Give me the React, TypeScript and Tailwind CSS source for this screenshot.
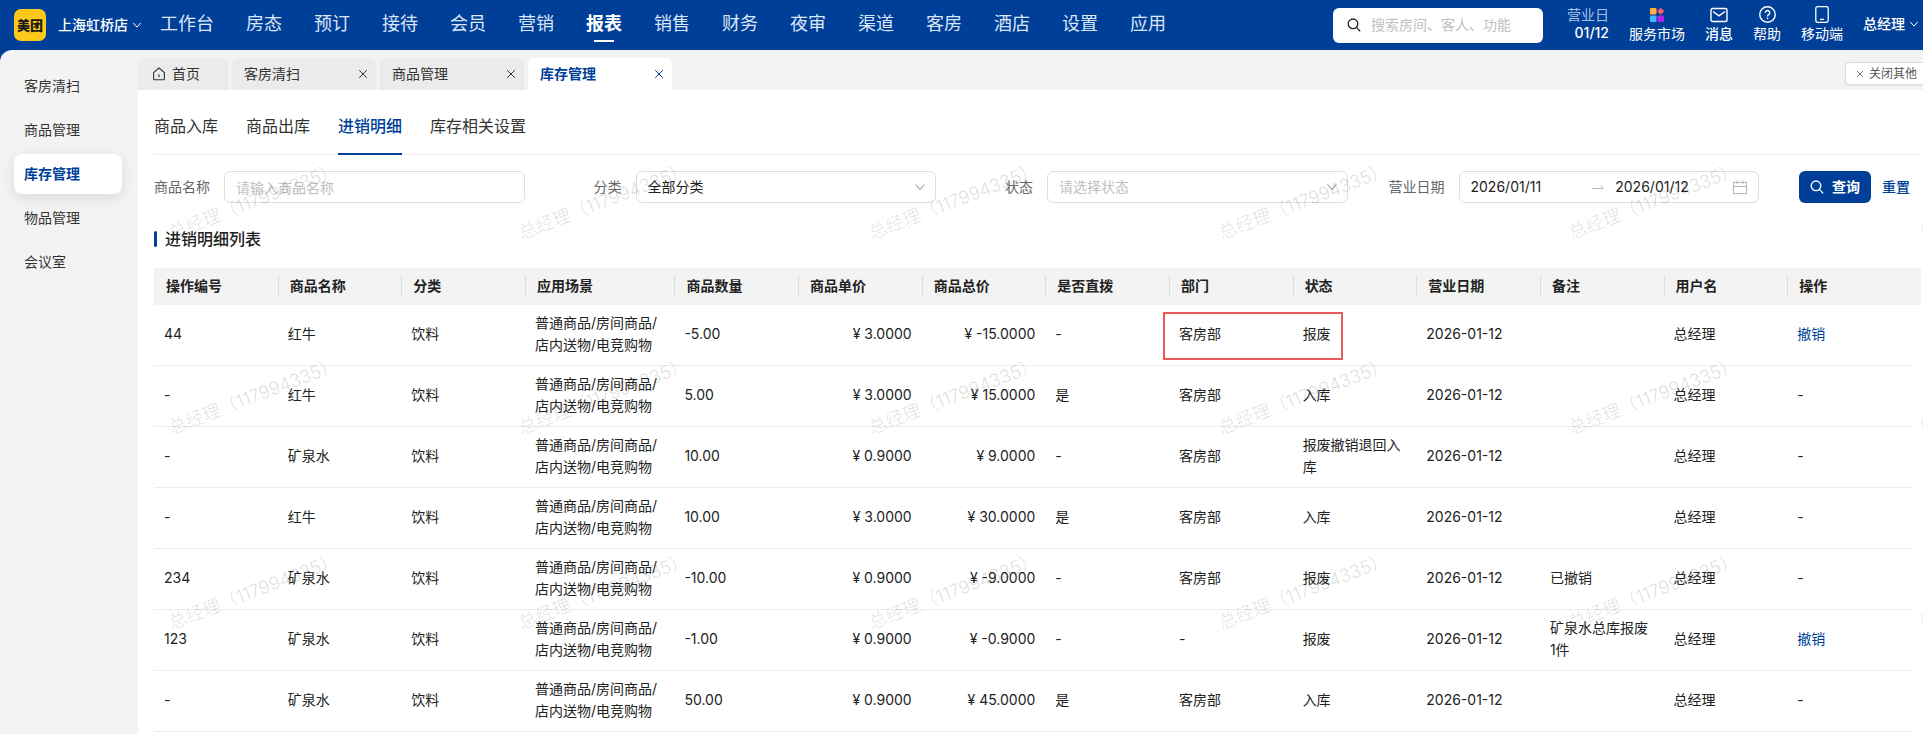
import React from "react";

const navItems = ["工作台", "房态", "预订", "接待", "会员", "营销", "报表", "销售", "财务", "夜审", "渠道", "客房", "酒店", "设置", "应用"];
const sideItems = ["客房清扫", "商品管理", "库存管理", "物品管理", "会议室"];
const subTabs = ["商品入库", "商品出库", "进销明细", "库存相关设置"];
const columns = ["操作编号", "商品名称", "分类", "应用场景", "商品数量", "商品单价", "商品总价", "是否直拨", "部门", "状态", "营业日期", "备注", "用户名", "操作"];

type Row = {
  id: string;
  name: string;
  qty: string;
  price: string;
  total: string;
  direct: string;
  dept: string;
  status: string;
  note: string;
  revocable?: boolean;
  marked?: boolean;
};

const rows: Row[] = [
  { id: "44", name: "红牛", qty: "-5.00", price: "¥ 3.0000", total: "¥ -15.0000", direct: "-", dept: "客房部", status: "报废", note: "", revocable: true, marked: true },
  { id: "-", name: "红牛", qty: "5.00", price: "¥ 3.0000", total: "¥ 15.0000", direct: "是", dept: "客房部", status: "入库", note: "" },
  { id: "-", name: "矿泉水", qty: "10.00", price: "¥ 0.9000", total: "¥ 9.0000", direct: "-", dept: "客房部", status: "报废撤销退回入库", note: "" },
  { id: "-", name: "红牛", qty: "10.00", price: "¥ 3.0000", total: "¥ 30.0000", direct: "是", dept: "客房部", status: "入库", note: "" },
  { id: "234", name: "矿泉水", qty: "-10.00", price: "¥ 0.9000", total: "¥ -9.0000", direct: "-", dept: "客房部", status: "报废", note: "已撤销" },
  { id: "123", name: "矿泉水", qty: "-1.00", price: "¥ 0.9000", total: "¥ -0.9000", direct: "-", dept: "-", status: "报废", note: "矿泉水总库报废1件", revocable: true },
  { id: "-", name: "矿泉水", qty: "50.00", price: "¥ 0.9000", total: "¥ 45.0000", direct: "是", dept: "客房部", status: "入库", note: "" },
];

function Chevron({ className }: { className?: string }) {
  return (
    <svg viewBox="0 0 12 12" className={className} fill="none" stroke="currentColor" strokeWidth="1.2" aria-hidden="true">
      <path d="M1.5 3.5 6 8.5l4.5-5" />
    </svg>
  );
}

function Cross({ className }: { className?: string }) {
  return (
    <svg viewBox="0 0 12 12" className={className} fill="none" stroke="currentColor" strokeWidth="1.2" aria-hidden="true">
      <path d="M1.5 1.5l9 9M10.5 1.5l-9 9" />
    </svg>
  );
}

function Magnifier({ className }: { className?: string }) {
  return (
    <svg viewBox="0 0 14 14" className={className} fill="none" stroke="currentColor" strokeWidth="1.3" aria-hidden="true">
      <circle cx="6" cy="5.8" r="4.8" />
      <path d="M9.4 9.4 13.2 13.4" />
    </svg>
  );
}

function HeaderLink({ label, strong, children }: { label: string; strong?: boolean; children: React.ReactNode }) {
  return (
    <a href="#" className="flex flex-col items-center gap-[3px] pb-0.5">
      <span className="flex h-[17px] items-center">{children}</span>
      <span className={strong ? "leading-4 font-medium" : "leading-4"}>{label}</span>
    </a>
  );
}

function Header() {
  return (
    <header className="flex h-[50px] items-center bg-[#003f98] pr-1 pl-3.5 text-sm whitespace-nowrap text-white">
      <span className="flex size-8 shrink-0 items-center justify-center rounded-[7px] bg-[#ffc91a] text-[13px] font-black text-[#1a1a1a]">美团</span>
      <button type="button" className="ml-3 flex shrink-0 items-center gap-1 font-medium">
        上海虹桥店
        <Chevron className="size-2.5" />
      </button>
      <nav className="ml-[18px] flex gap-8 text-lg leading-[48px]">
        {navItems.map((n) => (
          <a
            key={n}
            href="#"
            className={
              n === "报表"
                ? "relative h-[50px] font-bold after:absolute after:bottom-2 after:left-2 after:h-0.5 after:w-5 after:bg-white"
                : "h-[50px] text-[#dbe6f6]"
            }
          >
            {n}
          </a>
        ))}
      </nav>
      <div className="ml-auto flex items-center gap-5">
        <label className="mr-1 flex h-[35px] w-[210px] items-center gap-2.5 rounded-md bg-white px-3.5 text-[#222]">
          <Magnifier className="size-3.5 shrink-0" />
          <input aria-label="搜索" placeholder="搜索房间、客人、功能" className="w-full min-w-0 text-sm outline-none placeholder:text-[#bfbfbf]" />
        </label>
        <div className="flex flex-col items-end pb-0.5 leading-[18px]">
          <span className="text-[#a9c2e6]">营业日</span>
          <span className="font-medium">01/12</span>
        </div>
        <HeaderLink label="服务市场">
          <svg viewBox="0 0 14 14" className="size-3.5" aria-hidden="true">
            <rect width="6.500" height="6.500" rx="1" fill="#ffb03a" />
            <path d="M10.700 0 14 3.300 10.700 6.600 7.400 3.300z" fill="#ff5a6a" stroke="#ff5a6a" strokeWidth="0.6" strokeLinejoin="round" />
            <rect y="7.500" width="6.500" height="6.500" rx="1" fill="#3fb4ff" />
            <rect x="7.500" y="7.500" width="6.500" height="6.500" rx="1" fill="#b620f0" />
          </svg>
        </HeaderLink>
        <HeaderLink label="消息" strong>
          <svg viewBox="0 0 18 16" className="h-4 w-[18px]" fill="none" stroke="currentColor" strokeWidth="1.4" aria-hidden="true">
            <rect x="1" y="1.500" width="16" height="13" rx="1.800" />
            <path d="M3 4.500l6 4.300 6-4.300" />
          </svg>
        </HeaderLink>
        <HeaderLink label="帮助">
          <svg viewBox="0 0 16 16" className="size-[17px]" fill="none" stroke="currentColor" strokeWidth="1.3" aria-hidden="true">
            <circle cx="8" cy="8" r="7.300" />
            <path d="M5.900 6.400a2.100 2.100 0 1 1 3.200 1.800c-.8.4-1.100.8-1.100 1.600" />
            <path d="M8 11v1.400" />
          </svg>
        </HeaderLink>
        <HeaderLink label="移动端">
          <svg viewBox="0 0 14 17" className="h-[17px] w-3.5" fill="none" stroke="currentColor" strokeWidth="1.3" aria-hidden="true">
            <rect x="0.800" y="0.700" width="12.400" height="15.600" rx="1.800" />
            <path d="M5 13.400h4" />
          </svg>
        </HeaderLink>
        <button type="button" className="flex items-center gap-1 pb-0.5 font-medium">
          总经理
          <Chevron className="size-2.5" />
        </button>
      </div>
    </header>
  );
}

function PageTabs() {
  return (
    <div className="flex h-10 items-end gap-1 text-sm text-[#333]">
      <a href="#" className="flex h-8 w-[90px] items-center gap-1.5 rounded-t-md bg-[#ebebeb] pl-3.5">
        <svg viewBox="0 0 14 14" className="size-3.5" fill="none" stroke="currentColor" strokeWidth="1.1" aria-hidden="true">
          <path d="M1.600 5.600 7 1l5.400 4.600v6.200c0 .6-.4 1-1 1H2.600c-.6 0-1-.4-1-1z" />
          <path d="M7 7.300v3" />
        </svg>
        首页
      </a>
      {["客房清扫", "商品管理", "库存管理"].map((t) => (
        <div
          key={t}
          className={
            t === "库存管理"
              ? "flex h-8 w-36 items-center justify-between rounded-t-md bg-white px-2 pl-3 font-bold text-[#003f98]"
              : "flex h-8 w-36 items-center justify-between rounded-t-md bg-[#ebebeb] px-2 pl-3"
          }
        >
          <a href="#">{t}</a>
          <button type="button" aria-label="关闭">
            <Cross className="size-2.5" />
          </button>
        </div>
      ))}
      <button type="button" className="mb-[5px] ml-auto flex h-[23px] items-center gap-[5px] rounded-l border border-r-0 border-[#dcdcdc] bg-white pr-1.5 pl-2.5 text-xs text-[#555] shadow-xs">
        <Cross className="size-2" />
        关闭其他
      </button>
    </div>
  );
}

const fieldBox = "h-8 w-full rounded-md border border-[#dedede] bg-white px-[11px] text-sm outline-none";

function Filters() {
  return (
    <form className="mt-4 flex h-8 items-center text-sm whitespace-nowrap text-[#666]">
      <label htmlFor="goods" className="mr-3.5">商品名称</label>
      <div className="min-w-0 flex-1">
        <input id="goods" placeholder="请输入商品名称" className={`${fieldBox} placeholder:text-[#bfbfbf]`} />
      </div>
      <label htmlFor="category" className="mr-3.5 w-[97px] text-right">分类</label>
      <div className="relative min-w-0 flex-1">
        <select id="category" className={`${fieldBox} appearance-none text-[#222]`}>
          <option>全部分类</option>
        </select>
        <Chevron className="pointer-events-none absolute top-2.5 right-2.5 size-3 text-[#b5b5b5]" />
      </div>
      <label htmlFor="status" className="mr-3.5 w-[97px] text-right">状态</label>
      <div className="relative min-w-0 flex-1">
        <select id="status" className={`${fieldBox} appearance-none text-[#bfbfbf]`}>
          <option>请选择状态</option>
        </select>
        <Chevron className="pointer-events-none absolute top-2.5 right-2.5 size-3 text-[#b5b5b5]" />
      </div>
      <label htmlFor="from" className="mr-3.5 w-[97px] text-right">营业日期</label>
      <div className="min-w-0 flex-1">
        <div className="flex h-8 items-center rounded-md border border-[#dedede] bg-white px-[11px] text-[#222]">
          <input id="from" defaultValue="2026/01/11" className="w-full min-w-0 flex-1 outline-none" />
          <svg viewBox="0 0 12 6" className="mr-[11px] ml-1 h-1.5 w-3 shrink-0" fill="none" stroke="#b5b5b5" aria-hidden="true">
            <path d="M0 4.500h11.500L8.500 1.500" />
          </svg>
          <input aria-label="结束日期" defaultValue="2026/01/12" className="w-full min-w-0 flex-1 outline-none" />
          <svg viewBox="0 0 14 14" className="size-3.5 shrink-0" fill="none" stroke="#b5b5b5" aria-hidden="true">
            <path d="M.5 2.500h13v11H.5zM.5 6.500h13M4 .5v3.500M10 .5v3.500" />
          </svg>
        </div>
      </div>
      <button type="submit" className="ml-10 flex h-8 w-[72px] items-center justify-center gap-2 rounded-md bg-[#003f98] font-bold text-white">
        <Magnifier className="size-3.5" />
        查询
      </button>
      <button type="reset" className="mr-[13px] ml-[11px] font-medium text-[#003f98]">重置</button>
    </form>
  );
}

function StockTable() {
  return (
    <div className="mr-0.5 bg-[linear-gradient(#f3f3f3,#f3f3f3)] bg-[length:100%_37px] bg-no-repeat pr-2.5">
      <table className="w-full table-fixed border-separate border-spacing-0 text-sm leading-[22px] text-[#222]">
        <colgroup>
          {columns.map((c) => (
            <col key={c} className={c === "应用场景" ? "w-[8.5%]" : "w-[7.03%]"} />
          ))}
        </colgroup>
        <thead>
          <tr className="h-[37px]">
            {columns.map((c, i) => (
              <th key={c} className="p-0 pb-0.5 text-left font-bold">
                <div className={i === 0 ? "pl-3" : "border-l border-[#dcdcdc] pl-[11px]"}>{c}</div>
              </th>
            ))}
          </tr>
        </thead>
        <tbody>
          {rows.map((r, i) => (
            <tr key={i} className="h-[61px] [&>td]:border-b [&>td]:border-[#ececec] [&>td]:px-2.5 [&>td]:pt-0 [&>td]:pb-0.5">
              <td>{r.id}</td>
              <td>{r.name}</td>
              <td>饮料</td>
              <td>
                普通商品/房间商品/
                <br />
                店内送物/电竞购物
              </td>
              <td>{r.qty}</td>
              <td className="text-right">{r.price}</td>
              <td className="text-right">{r.total}</td>
              <td>{r.direct}</td>
              <td className="relative">
                {r.dept}
                {r.marked && <span className="pointer-events-none absolute top-[7px] -left-1.5 h-12 w-[180px] border-2 border-[#e85a5a]" />}
              </td>
              <td>{r.status}</td>
              <td className="whitespace-nowrap">2026-01-12</td>
              <td>{r.note}</td>
              <td>总经理</td>
              <td>{r.revocable ? <button type="button" className="text-[#003f98]">撤销</button> : "-"}</td>
            </tr>
          ))}
        </tbody>
      </table>
    </div>
  );
}

function Watermark() {
  return (
    <div aria-hidden="true" className="pointer-events-none absolute inset-0 overflow-hidden">
      <div className="grid w-[2100px] auto-rows-[195px] grid-cols-[repeat(6,350px)] pt-[95px]">
        {Array.from({ length: 18 }, (_, i) => (
          <span key={i} className="h-6 w-[190px] origin-bottom-left translate-x-9 translate-y-[76px] -rotate-[21deg] text-lg leading-6 font-light whitespace-nowrap text-black/15">
            总经理（117994335）
          </span>
        ))}
      </div>
    </div>
  );
}

export default function App() {
  return (
    <div className="flex h-screen flex-col overflow-hidden bg-[#003f98] font-[Inter,'Noto_Sans_CJK_SC',sans-serif]">
      <Header />
      <div className="flex min-h-0 flex-1 rounded-tl-xl bg-[#f3f3f3]">
        <aside className="w-[138px] shrink-0 px-3.5 pt-4">
          <nav className="flex w-[108px] flex-col gap-1 text-sm leading-10 text-[#333]">
            {sideItems.map((s) => (
              <a
                key={s}
                href="#"
                className={
                  s === "库存管理"
                    ? "h-10 rounded-lg bg-white pl-2.5 font-bold text-[#003f98] shadow-[0_4px_14px_rgba(0,0,0,0.1)]"
                    : "h-10 pl-2.5"
                }
              >
                {s}
              </a>
            ))}
          </nav>
        </aside>
        <div className="relative flex min-w-0 flex-1 flex-col">
          <PageTabs />
          <main className="flex-1 bg-white pl-4">
            <div className="mr-[3px] flex h-[65px] gap-7 border-b border-[#ececec] pt-1 text-base text-[#333]">
              {subTabs.map((t) => (
                <a
                  key={t}
                  href="#"
                  className={
                    t === "进销明细"
                      ? "-mb-px border-b-2 border-[#003f98] leading-[64px] font-medium text-[#003f98]"
                      : "leading-[64px]"
                  }
                >
                  {t}
                </a>
              ))}
            </div>
            <Filters />
            <h2 className="mt-7 mb-[21px] flex h-4 items-center gap-2 text-base font-medium text-[#222]">
              <span className="h-4 w-[3px] rounded-sm bg-[#003f98]" />
              进销明细列表
            </h2>
            <StockTable />
          </main>
          <Watermark />
        </div>
      </div>
    </div>
  );
}
